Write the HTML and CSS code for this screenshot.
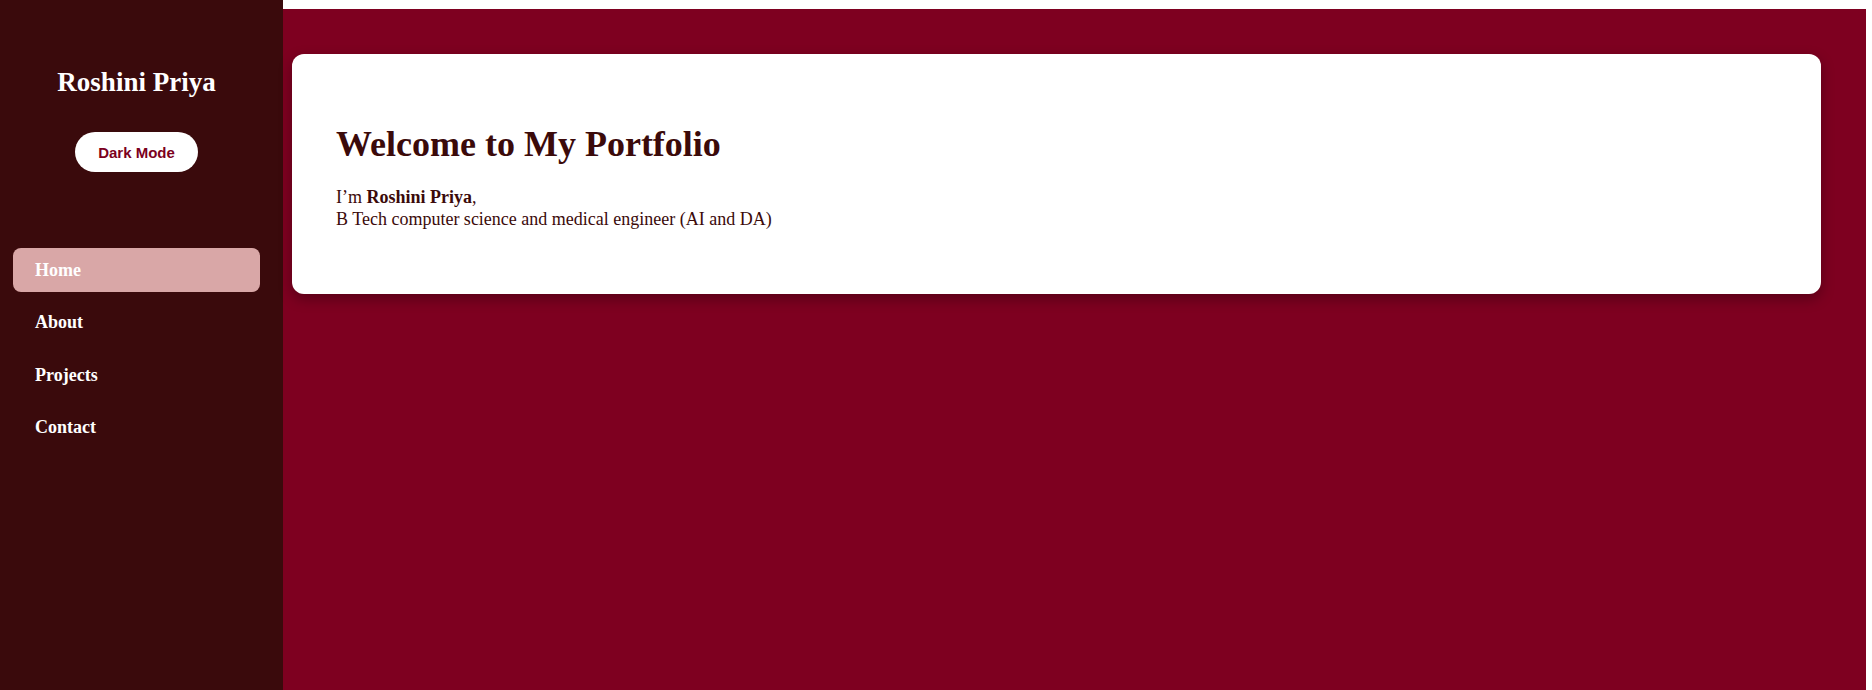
FILE: index.html
```html
<!DOCTYPE html>
<html lang="en">
<head>
<meta charset="utf-8">
<title>Roshini Priya | Portfolio</title>
<link rel="stylesheet" href="styles.css">
</head>
<body>
<div class="layout">
  <aside class="sidebar">
    <h2 class="name">Roshini Priya</h2>
    <button class="mode-btn" type="button">Dark Mode</button>
    <nav class="nav">
      <a class="nav-item active" href="#">Home</a>
      <a class="nav-item" href="#">About</a>
      <a class="nav-item" href="#">Projects</a>
      <a class="nav-item" href="#">Contact</a>
    </nav>
  </aside>
  <main class="main">
    <section class="card">
      <h1 class="title">Welcome to My Portfolio</h1>
      <p class="intro">I’m <strong>Roshini Priya</strong>,<br>B Tech computer science and medical engineer (AI and DA)</p>
    </section>
  </main>
</div>
</body>
</html>
```
FILE: styles.css
```css
html, body {
  margin: 0;
  padding: 0;
  background: #ffffff;
  font-family: "Liberation Serif", "Times New Roman", serif;
}

.layout {
  display: flex;
  min-height: 100vh;
}

.sidebar {
  width: 283px;
  flex: 0 0 283px;
  background: #3a0a0c;
  box-sizing: border-box;
  padding: 67px 23px 0 13px;
  display: flex;
  flex-direction: column;
  align-items: center;
  min-height: 100vh;
}

.name {
  margin: 0;
  color: #ffffff;
  font-size: 27px;
  font-weight: bold;
  line-height: 31px;
}

.mode-btn {
  margin-top: 34px;
  height: 40px;
  padding: 0 23px;
  border: none;
  border-radius: 20px;
  background: #ffffff;
  color: #7b0020;
  font-family: "Liberation Sans", Arial, sans-serif;
  font-weight: bold;
  font-size: 15px;
  cursor: pointer;
}

.nav {
  margin-top: 76px;
  width: 100%;
  display: flex;
  flex-direction: column;
  gap: 8.5px;
}

.nav-item {
  display: flex;
  align-items: center;
  height: 44px;
  padding-left: 22px;
  border-radius: 8px;
  color: #ffffff;
  font-weight: bold;
  font-size: 18px;
  text-decoration: none;
}

.nav-item.active {
  background: #d9a7a7;
}

.main {
  flex: 1;
  margin: 9px 6px 0 0;
  background: #7e0020;
  padding: 45px 45px 0 9px;
}

.card {
  background: #ffffff;
  border-radius: 12px;
  box-shadow: 0 5px 14px rgba(0, 0, 0, 0.3);
  padding: 70px 44px 64px;
  color: #3b0a0a;
}

.title {
  margin: 0 0 21px;
  font-size: 36px;
  font-weight: bold;
  line-height: 41px;
}

.intro {
  margin: 0;
  font-size: 18px;
  line-height: 22px;
}
```
